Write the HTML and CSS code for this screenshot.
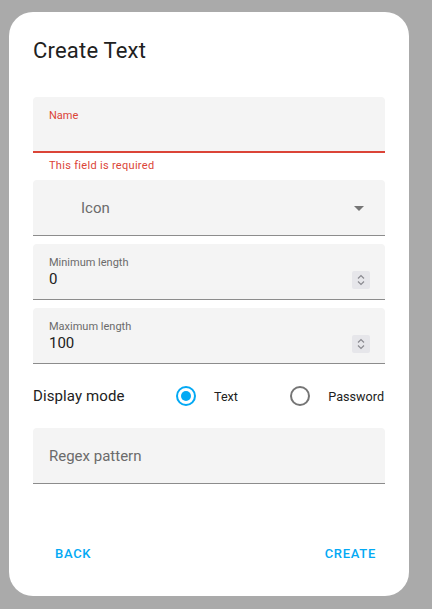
FILE: index.html
```html
<!DOCTYPE html>
<html>
<head>
<meta charset="utf-8">
<link rel="stylesheet" href="styles.css">
</head>
<body>
<div class="dialog">
  <h2 class="title">Create Text</h2>
  <div class="content">
    <div class="field field--error">
      <span class="float-label">Name</span>
    </div>
    <div class="helper">This field is required</div>

    <div class="field field--select">
      <span class="placeholder placeholder--indent">Icon</span>
      <svg class="arrow" width="10" height="5" viewBox="0 0 10 5"><path d="M0 0 L10 0 L5 5 Z" fill="#757575"/></svg>
    </div>

    <div class="field field--number">
      <div class="stack">
        <span class="float-label">Minimum length</span>
        <span class="value">0</span>
      </div>
      <svg class="spin" width="18" height="18" viewBox="0 0 18 18"><rect width="18" height="18" rx="2" fill="#e6e6ea"/><path d="M6 7.5 L9 4.5 L12 7.5" fill="none" stroke="#8a8a90" stroke-width="1.2"/><path d="M6 10.5 L9 13.5 L12 10.5" fill="none" stroke="#8a8a90" stroke-width="1.2"/></svg>
    </div>

    <div class="field field--number">
      <div class="stack">
        <span class="float-label">Maximum length</span>
        <span class="value">100</span>
      </div>
      <svg class="spin" width="18" height="18" viewBox="0 0 18 18"><rect width="18" height="18" rx="2" fill="#e6e6ea"/><path d="M6 7.5 L9 4.5 L12 7.5" fill="none" stroke="#8a8a90" stroke-width="1.2"/><path d="M6 10.5 L9 13.5 L12 10.5" fill="none" stroke="#8a8a90" stroke-width="1.2"/></svg>
    </div>

    <div class="mode-row">
      <span class="mode-label">Display mode</span>
      <label class="formfield">
        <span class="radio-box"><span class="radio radio--on"></span></span>
        <span class="radio-text">Text</span>
      </label>
      <label class="formfield formfield--last">
        <span class="radio-box"><span class="radio"></span></span>
        <span class="radio-text">Password</span>
      </label>
    </div>

    <div class="field field--plain">
      <span class="placeholder">Regex pattern</span>
    </div>
  </div>
  <div class="actions">
    <button class="btn">BACK</button>
    <button class="btn">CREATE</button>
  </div>
</div>
</body>
</html>
```
FILE: styles.css
```css
* { box-sizing: border-box; }
html, body { margin: 0; padding: 0; }
body {
  background: #aaaaaa;
  width: 432px;
  height: 609px;
  overflow: hidden;
  font-family: Roboto, "Liberation Sans", sans-serif;
  padding: 12px 0 0 9px;
}
.dialog {
  width: 400px;
  height: 584px;
  background: #fff;
  border-radius: 24px;
  display: flex;
  flex-direction: column;
  padding: 23px 24px 25px 24px;
}
.title {
  margin: 0;
  font-size: 22px;
  line-height: 32px;
  font-weight: 400;
  color: #212121;
  letter-spacing: 0.2px;
}
.content {
  margin-top: 30px;
  display: flex;
  flex-direction: column;
}
.field {
  height: 56px;
  background: #f4f4f4;
  border-radius: 4px 4px 0 0;
  border-bottom: 1px solid #8c8c8c;
  padding: 0 16px;
  display: flex;
  align-items: center;
  position: relative;
  margin-bottom: 8px;
}
.field--error {
  border-bottom: 2px solid #db4437;
  margin-bottom: 0;
  align-items: flex-start;
}
.field--error .float-label {
  color: #db4437;
  margin-top: 12px;
  display: block;
  line-height: 14px;
}
.float-label {
  font-size: 11px;
  color: #6b6b6b;
  line-height: 14px;
}
.helper {
  height: 27px;
  padding: 6px 16px 0;
  font-size: 11px;
  line-height: 14px;
  color: #db4437;
  letter-spacing: 0.3px;
}
.placeholder {
  font-size: 15px;
  color: #6b6b6b;
  flex: 1;
}
.placeholder--indent { padding-left: 32px; }
.arrow { margin-right: 5px; margin-top: 2px; }
.field--number { align-items: flex-start; }
.stack {
  display: flex;
  flex-direction: column;
  flex: 1;
  padding-top: 12px;
}
.value {
  font-size: 15px;
  line-height: 20px;
  color: #212121;
  margin-top: -1px;
}
.spin { margin-top: 27px; margin-right: -1px; }
.mode-row {
  height: 48px;
  margin: 0 0 8px;
  display: flex;
  align-items: center;
}
.mode-label {
  width: 133px;
  font-size: 15px;
  color: #212121;
  letter-spacing: 0.1px;
}
.formfield {
  display: flex;
  align-items: center;
}
.formfield--last { margin-left: auto; margin-right: 1px; }
.radio-box {
  width: 40px;
  height: 40px;
  display: flex;
  align-items: center;
  justify-content: center;
}
.radio {
  width: 20px;
  height: 20px;
  border-radius: 50%;
  border: 2px solid #757575;
  display: flex;
  align-items: center;
  justify-content: center;
}
.radio--on { border-color: #03a9f4; }
.radio--on::after {
  content: "";
  width: 10px;
  height: 10px;
  border-radius: 50%;
  background: #03a9f4;
}
.radio-text {
  padding-left: 8px;
  font-size: 12.6px;
  color: #212121;
}
.field--plain { margin-bottom: 0; }
.actions {
  margin-top: auto;
  display: flex;
  justify-content: space-between;
  padding: 0 1px 0 14px;
}
.btn {
  background: none;
  border: none;
  height: 36px;
  padding: 0 8px;
  font-family: Roboto, "Liberation Sans", sans-serif;
  font-size: 13px;
  font-weight: 500;
  letter-spacing: 0.7px;
  color: #03a9f4;
}
```
